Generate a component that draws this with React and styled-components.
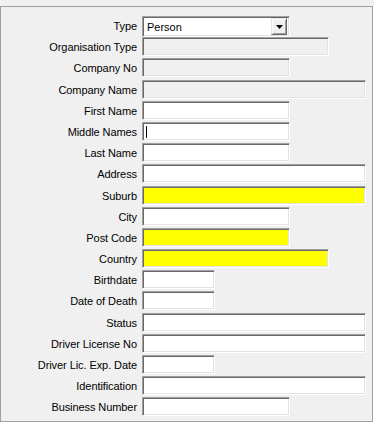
import React from "react";
import styled, { createGlobalStyle } from "styled-components";

const Global = createGlobalStyle`
  html, body { margin: 0; padding: 0; background: #f0f0f0; }
  body { font-family: "Liberation Sans", Arial, sans-serif; font-size: 11px; color: #000; }
`;

const Page = styled.div`
  width: 374px;
  height: 423px;
  padding-top: 6px;
  box-sizing: border-box;
  background: #f0f0f0;
`;

const Frame = styled.div`
  width: 373px;
  height: 416px;
  box-sizing: border-box;
  border: 1px solid #a0a0a0;
  box-shadow: 1px 1px 0 #ffffff;
  padding-top: 9px;
`;

const Form = styled.div`
  display: grid;
  grid-template-columns: 136px 1fr;
  column-gap: 5px;
  grid-auto-rows: 19px;
  row-gap: 2.2px;
`;

const Label = styled.div`
  text-align: right;
  white-space: nowrap;
  line-height: 20px;
  font-size: 11px;
  letter-spacing: -0.08px;
`;

const Field = styled.div`
  position: relative;
  width: ${(p) => p.$w}px;
  height: 19px;
  box-sizing: border-box;
  background: ${(p) => p.$bg || "#ffffff"};
  border-top: 1px solid #a0a0a0;
  border-left: 1px solid #a0a0a0;
  border-right: 1px solid #ffffff;
  border-bottom: 1px solid #ffffff;
  box-shadow: inset 1px 1px 0 #696969, inset -1px -1px 0 #e3e3e3;
`;

const Caret = styled.span`
  position: absolute;
  left: 3px;
  top: 3px;
  width: 1px;
  height: 12px;
  background: #000;
`;

const Combo = styled.div`
  display: flex;
  align-items: center;
  width: 148px;
  height: 21px;
  box-sizing: border-box;
  background: #fff;
  border-top: 1px solid #a0a0a0;
  border-left: 1px solid #a0a0a0;
  border-right: 1px solid #ffffff;
  border-bottom: 1px solid #ffffff;
  box-shadow: inset 1px 1px 0 #696969, inset -1px -1px 0 #e3e3e3;
  padding: 2px 2px 2px 4px;
`;

const ComboText = styled.span`
  flex: 1;
  font-size: 11px;
`;

const DropButton = styled.div`
  width: 16px;
  height: 17px;
  box-sizing: border-box;
  background: #f0f0f0;
  border-top: 1px solid #e3e3e3;
  border-left: 1px solid #e3e3e3;
  border-right: 1px solid #696969;
  border-bottom: 1px solid #696969;
  box-shadow: inset 1px 1px 0 #ffffff, inset -1px -1px 0 #a0a0a0;
  display: flex;
  align-items: center;
  justify-content: center;
`;

const fields = [
  ["Organisation Type", 187, "#f0f0f0"],
  ["Company No", 148, "#f0f0f0"],
  ["Company Name", 224, "#f0f0f0"],
  ["First Name", 148],
  ["Middle Names", 148, null, true],
  ["Last Name", 148],
  ["Address", 224],
  ["Suburb", 224, "#ffff00"],
  ["City", 148],
  ["Post Code", 148, "#ffff00"],
  ["Country", 187, "#ffff00"],
  ["Birthdate", 73],
  ["Date of Death", 73],
  ["Status", 224],
  ["Driver License No", 224],
  ["Driver Lic. Exp. Date", 73],
  ["Identification", 224],
  ["Business Number", 148],
];

export default function App() {
  return (
    <Page>
      <Global />
      <Frame>
        <Form>
          <Label>Type</Label>
          <Combo>
            <ComboText>Person</ComboText>
            <DropButton>
              <svg width="7" height="4" viewBox="0 0 7 4">
                <path d="M0 0H7L3.5 4Z" fill="#000" />
              </svg>
            </DropButton>
          </Combo>
          {fields.map(([label, w, bg, caret]) => (
            <React.Fragment key={label}>
              <Label>{label}</Label>
              <Field $w={w} $bg={bg}>
                {caret && <Caret />}
              </Field>
            </React.Fragment>
          ))}
        </Form>
      </Frame>
    </Page>
  );
}
